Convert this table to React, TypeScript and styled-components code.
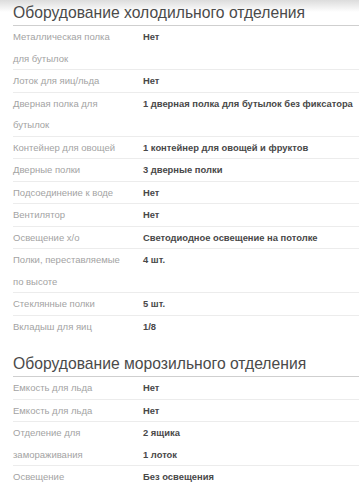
import styled, { createGlobalStyle } from 'styled-components';

const GlobalStyle = createGlobalStyle`
  html, body {
    margin: 0;
    padding: 0;
    background: linear-gradient(#dcdcdc, #ffffff 12px) no-repeat, #ffffff;
  }
  body {
    font-family: 'Liberation Sans', Arial, sans-serif;
  }
`;

const StyledPage = styled.div`
  padding-left: 13px;
`;

const StyledSection = styled.section`
  & + & {
    margin-top: 14px;
  }
`;

const StyledTitle = styled.h3`
  border-bottom: 1px solid #cfcfcf;
  color: #4a4a4a;
  font-size: 15.7px;
  font-weight: 400;
  height: 25px;
  line-height: 25px;
  margin: 0;
`;

const StyledRow = styled.div<{ isLast?: boolean }>`
  border-bottom: ${({ isLast }) => (isLast ? 'none' : '1px solid #ececec')};
  display: grid;
  grid-template-columns: 130px 1fr;
  line-height: 21.5px;
`;

const StyledLabel = styled.div`
  color: #a3a3a3;
  font-size: 9.5px;
  padding-right: 18px;
`;

const StyledValue = styled.div`
  color: #484848;
  font-size: 9.4px;
  font-weight: 700;
`;

type Spec = {
  label: string;
  value: string[];
};

const fridge: Spec[] = [
  { label: 'Металлическая полка для бутылок', value: ['Нет'] },
  { label: 'Лоток для яиц/льда', value: ['Нет'] },
  { label: 'Дверная полка для бутылок', value: ['1 дверная полка для бутылок без фиксатора'] },
  { label: 'Контейнер для овощей', value: ['1 контейнер для овощей и фруктов'] },
  { label: 'Дверные полки', value: ['3 дверные полки'] },
  { label: 'Подсоединение к воде', value: ['Нет'] },
  { label: 'Вентилятор', value: ['Нет'] },
  { label: 'Освещение х/о', value: ['Светодиодное освещение на потолке'] },
  { label: 'Полки, переставляемые по высоте', value: ['4 шт.'] },
  { label: 'Стеклянные полки', value: ['5 шт.'] },
  { label: 'Вкладыш для яиц', value: ['1/8'] },
];

const freezer: Spec[] = [
  { label: 'Емкость для льда', value: ['Нет'] },
  { label: 'Емкость для льда', value: ['Нет'] },
  { label: 'Отделение для замораживания', value: ['2 ящика', '1 лоток'] },
  { label: 'Освещение', value: ['Без освещения'] },
];

const SpecSection = ({ title, rows }: { title: string; rows: Spec[] }) => (
  <StyledSection>
    <StyledTitle>{title}</StyledTitle>
    {rows.map((row, i) => (
      <StyledRow key={i} isLast={i === rows.length - 1}>
        <StyledLabel>{row.label}</StyledLabel>
        <StyledValue>
          {row.value.map((v) => (
            <div key={v}>{v}</div>
          ))}
        </StyledValue>
      </StyledRow>
    ))}
  </StyledSection>
);

const App = () => (
  <>
    <GlobalStyle />
    <StyledPage>
      <SpecSection title="Оборудование холодильного отделения" rows={fridge} />
      <SpecSection title="Оборудование морозильного отделения" rows={freezer} />
    </StyledPage>
  </>
);

export default App;
